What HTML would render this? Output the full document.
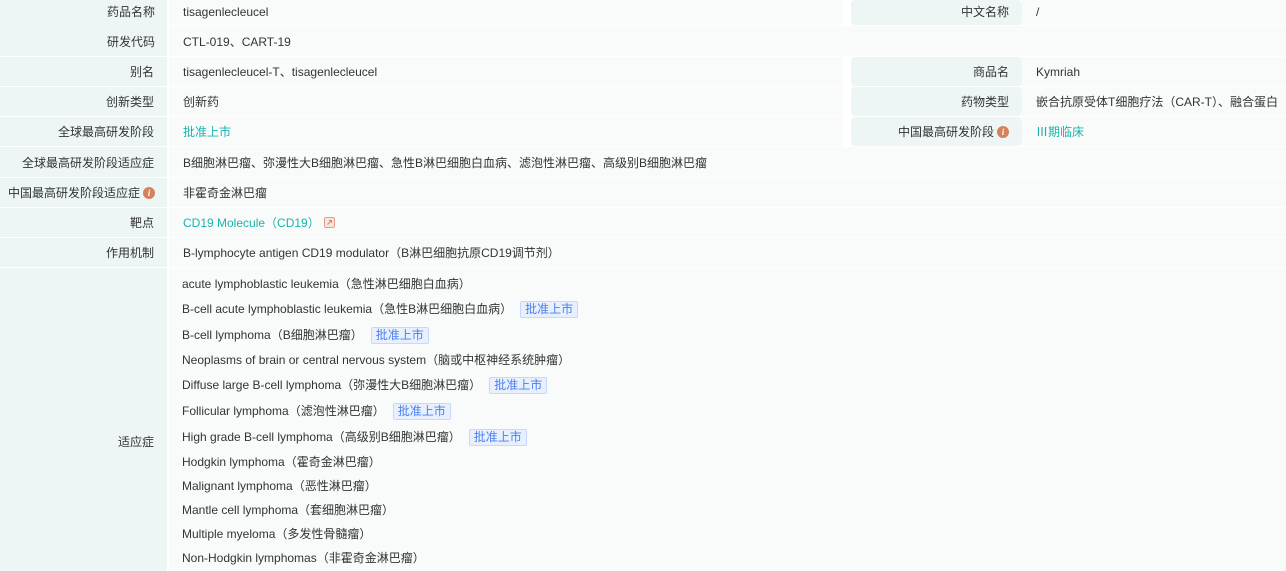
<!DOCTYPE html>
<html><head><meta charset="utf-8"><style>
*{margin:0;padding:0;box-sizing:border-box}
body{width:1286px;height:571px;background:#fff;position:relative;overflow:hidden;font-family:"Liberation Sans","Noto Sans CJK SC",sans-serif;font-size:12px;color:#333}
.c{position:absolute;display:flex;align-items:center}
.l{background:#eef5f5;justify-content:flex-end;padding-right:13px}
.v{background:#f9fbfb;padding-left:14px}
.rl{background:#eef5f5;justify-content:flex-end;padding-right:13px;border-radius:4px}
.lk{color:#1ab3ab}
.i{display:inline-block;width:12px;height:12px;border-radius:50%;background:#d4825c;color:#fff;font-size:9px;font-style:italic;font-weight:bold;text-align:center;line-height:12px;margin-left:3px;font-family:"Liberation Serif",serif}
.ind{position:absolute;left:182px}
.tag{display:inline-block;background:#e8f0fd;border:1px solid #c8d8fa;color:#4a7ff0;border-radius:2px;padding:0 4px;line-height:15px;margin-left:8px}
</style></head><body>
<div class="c l" style="left:0;top:0;width:167px;height:56px;align-items:flex-start"></div>
<div class="c" style="left:0;top:0;width:155px;height:23px;justify-content:flex-end">药品名称</div>
<div class="c" style="left:0;top:26px;width:155px;height:30px;justify-content:flex-end">研发代码</div>
<div class="c v" style="left:169px;top:0;width:674px;height:25px;padding-bottom:2px">tisagenlecleucel</div>
<div class="c v" style="left:169px;top:26px;width:1117px;height:30px">CTL-019、CART-19</div>
<div class="c v" style="left:843px;top:0;width:8px;height:25px;background:#fff"></div>
<div class="c rl" style="left:851px;top:0;width:171px;height:25px;padding-bottom:2px">中文名称</div>
<div class="c v" style="left:1022px;top:0;width:264px;height:25px;padding-bottom:2px">/</div>

<div class="c l" style="left:0;top:57px;width:167px;height:29px">别名</div>
<div class="c v" style="left:169px;top:57px;width:674px;height:29px">tisagenlecleucel-T、tisagenlecleucel</div>
<div class="c rl" style="left:851px;top:57px;width:171px;height:29px">商品名</div>
<div class="c v" style="left:1022px;top:57px;width:264px;height:29px">Kymriah</div>

<div class="c l" style="left:0;top:87px;width:167px;height:29px">创新类型</div>
<div class="c v" style="left:169px;top:87px;width:674px;height:29px">创新药</div>
<div class="c rl" style="left:851px;top:87px;width:171px;height:29px">药物类型</div>
<div class="c v" style="left:1022px;top:87px;width:264px;height:29px;white-space:nowrap">嵌合抗原受体T细胞疗法（CAR-T）、融合蛋白</div>

<div class="c l" style="left:0;top:117px;width:167px;height:29px">全球最高研发阶段</div>
<div class="c v lk" style="left:169px;top:117px;width:674px;height:29px">批准上市</div>
<div class="c rl" style="left:851px;top:117px;width:171px;height:29px">中国最高研发阶段<span class="i">i</span></div>
<div class="c v lk" style="left:1022px;top:117px;width:264px;height:29px">Ⅲ期临床</div>

<div class="c l" style="left:0;top:147px;width:167px;height:30px">全球最高研发阶段适应症</div>
<div class="c v" style="left:169px;top:147px;width:1117px;height:30px">B细胞淋巴瘤、弥漫性大B细胞淋巴瘤、急性B淋巴细胞白血病、滤泡性淋巴瘤、高级别B细胞淋巴瘤</div>

<div class="c l" style="left:0;top:178px;width:167px;height:29px;white-space:nowrap;padding-right:12px">中国最高研发阶段适应症<span class="i">i</span></div>
<div class="c v" style="left:169px;top:178px;width:1117px;height:29px">非霍奇金淋巴瘤</div>

<div class="c l" style="left:0;top:208px;width:167px;height:29px">靶点</div>
<div class="c v lk" style="left:169px;top:208px;width:1117px;height:29px">CD19 Molecule（CD19）<svg width="11" height="11" viewBox="0 0 11 11" style="margin-left:4px"><rect x="0.5" y="0.5" width="10" height="10" rx="1.5" fill="#f7e6dc" stroke="#e0a080"/><path d="M3.5 7.5L7.5 3.5M5 3.5h2.5V6" stroke="#d4825c" fill="none"/></svg></div>

<div class="c l" style="left:0;top:238px;width:167px;height:29px">作用机制</div>
<div class="c v" style="left:169px;top:238px;width:1117px;height:29px">B-lymphocyte antigen CD19 modulator（B淋巴细胞抗原CD19调节剂）</div>

<div class="c l" style="left:0;top:268px;width:167px;height:303px;align-items:flex-start;padding-top:165px">适应症</div>
<div class="c v" style="left:169px;top:268px;width:1117px;height:303px"></div>
<div class="ind" style="top:275px">acute lymphoblastic leukemia（急性淋巴细胞白血病）</div>
<div class="ind" style="top:300px">B-cell acute lymphoblastic leukemia（急性B淋巴细胞白血病）<span class="tag">批准上市</span></div>
<div class="ind" style="top:326px">B-cell lymphoma（B细胞淋巴瘤）<span class="tag">批准上市</span></div>
<div class="ind" style="top:351px">Neoplasms of brain or central nervous system（脑或中枢神经系统肿瘤）</div>
<div class="ind" style="top:376px">Diffuse large B-cell lymphoma（弥漫性大B细胞淋巴瘤）<span class="tag">批准上市</span></div>
<div class="ind" style="top:402px">Follicular lymphoma（滤泡性淋巴瘤）<span class="tag">批准上市</span></div>
<div class="ind" style="top:428px">High grade B-cell lymphoma（高级别B细胞淋巴瘤）<span class="tag">批准上市</span></div>
<div class="ind" style="top:453px">Hodgkin lymphoma（霍奇金淋巴瘤）</div>
<div class="ind" style="top:477px">Malignant lymphoma（恶性淋巴瘤）</div>
<div class="ind" style="top:501px">Mantle cell lymphoma（套细胞淋巴瘤）</div>
<div class="ind" style="top:525px">Multiple myeloma（多发性骨髓瘤）</div>
<div class="ind" style="top:549px">Non-Hodgkin lymphomas（非霍奇金淋巴瘤）</div>
</body></html>
